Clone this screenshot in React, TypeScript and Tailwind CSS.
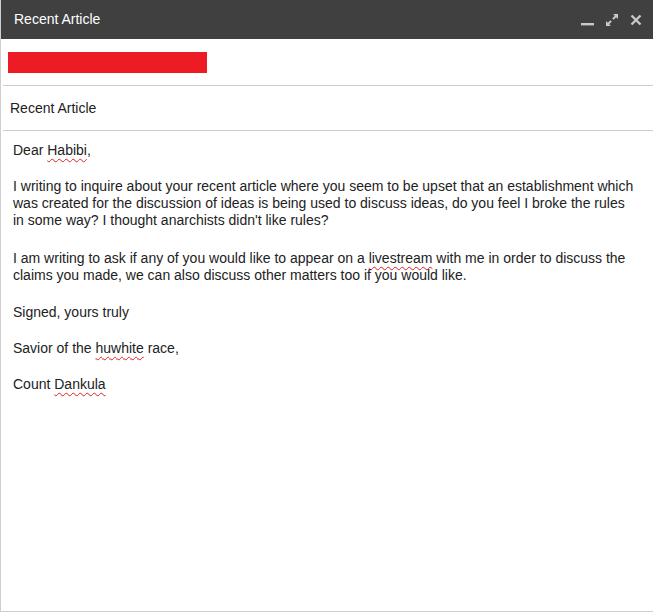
import React from 'react';

const font = { fontFamily: '"Liberation Sans", Arial, sans-serif' };

function Squiggle({ children }: { children: React.ReactNode }) {
  return (
    <span className="underline decoration-wavy decoration-[#e02020] decoration-1 underline-offset-[3px]">
      {children}
    </span>
  );
}

function HeaderIcons() {
  return (
    <div className="flex items-center gap-[11px] pr-[11px] text-[#c9c9c9]">
      {/* minimise */}
      <svg width="13" height="14" viewBox="0 0 13 14" className="mt-[2px]">
        <rect x="0" y="9" width="13" height="2.4" fill="currentColor" />
      </svg>
      {/* pop out */}
      <svg width="14" height="14" viewBox="0 0 14 14">
        <path d="M8 1h5v5l-1.8-1.8L8.6 6.8 7.2 5.4l2.6-2.6z" fill="currentColor" />
        <path d="M6 13H1V8l1.8 1.8 2.6-2.6 1.4 1.4-2.6 2.6z" fill="currentColor" />
      </svg>
      {/* close */}
      <svg width="12" height="12" viewBox="0 0 12 12">
        <path d="M1.5 1.5l9 9M10.5 1.5l-9 9" stroke="currentColor" strokeWidth="2.4" />
      </svg>
    </div>
  );
}

export default function App() {
  return (
    <div className="w-[653px] h-[612px] bg-white flex flex-col border-l border-b border-[#cfcfcf]" style={font}>
      <div className="h-[39px] shrink-0 bg-[#404040] flex items-center justify-between">
        <span className="pl-[13px] text-[14px] text-white">Recent Article</span>
        <HeaderIcons />
      </div>

      <div className="h-[46px] shrink-0 flex items-center pl-[7px] pt-[1px]">
        <div className="w-[199px] h-[21px] bg-[#ed1c24]" />
      </div>
      <div className="ml-[2px] h-px bg-[#cfcfcf]" />

      <div className="h-[44px] shrink-0 flex items-center pl-[9px] text-[14px] text-[#222]">
        Recent Article
      </div>
      <div className="ml-[2px] h-px bg-[#cfcfcf]" />

      <div className="pl-[12px] pt-[11px] text-[14px] leading-[17px] text-[#222] whitespace-nowrap">
        <div>
          Dear <Squiggle>Habibi</Squiggle>,
        </div>
        <div className="mt-[19px]">
          I writing to inquire about your recent article where you seem to be upset that an establishment which
          <br />
          was created for the discussion of ideas is being used to discuss ideas, do you feel I broke the rules
          <br />
          in some way? I thought anarchists didn't like rules?
        </div>
        <div className="mt-[21px]">
          I am writing to ask if any of you would like to appear on a <Squiggle>livestream</Squiggle> with me in order to discuss the
          <br />
          claims you made, we can also discuss other matters too if you would like.
        </div>
        <div className="mt-[20px]">Signed, yours truly</div>
        <div className="mt-[19px]">
          Savior of the <Squiggle>huwhite</Squiggle> race,
        </div>
        <div className="mt-[19px]">
          Count <Squiggle>Dankula</Squiggle>
        </div>
      </div>
    </div>
  );
}
